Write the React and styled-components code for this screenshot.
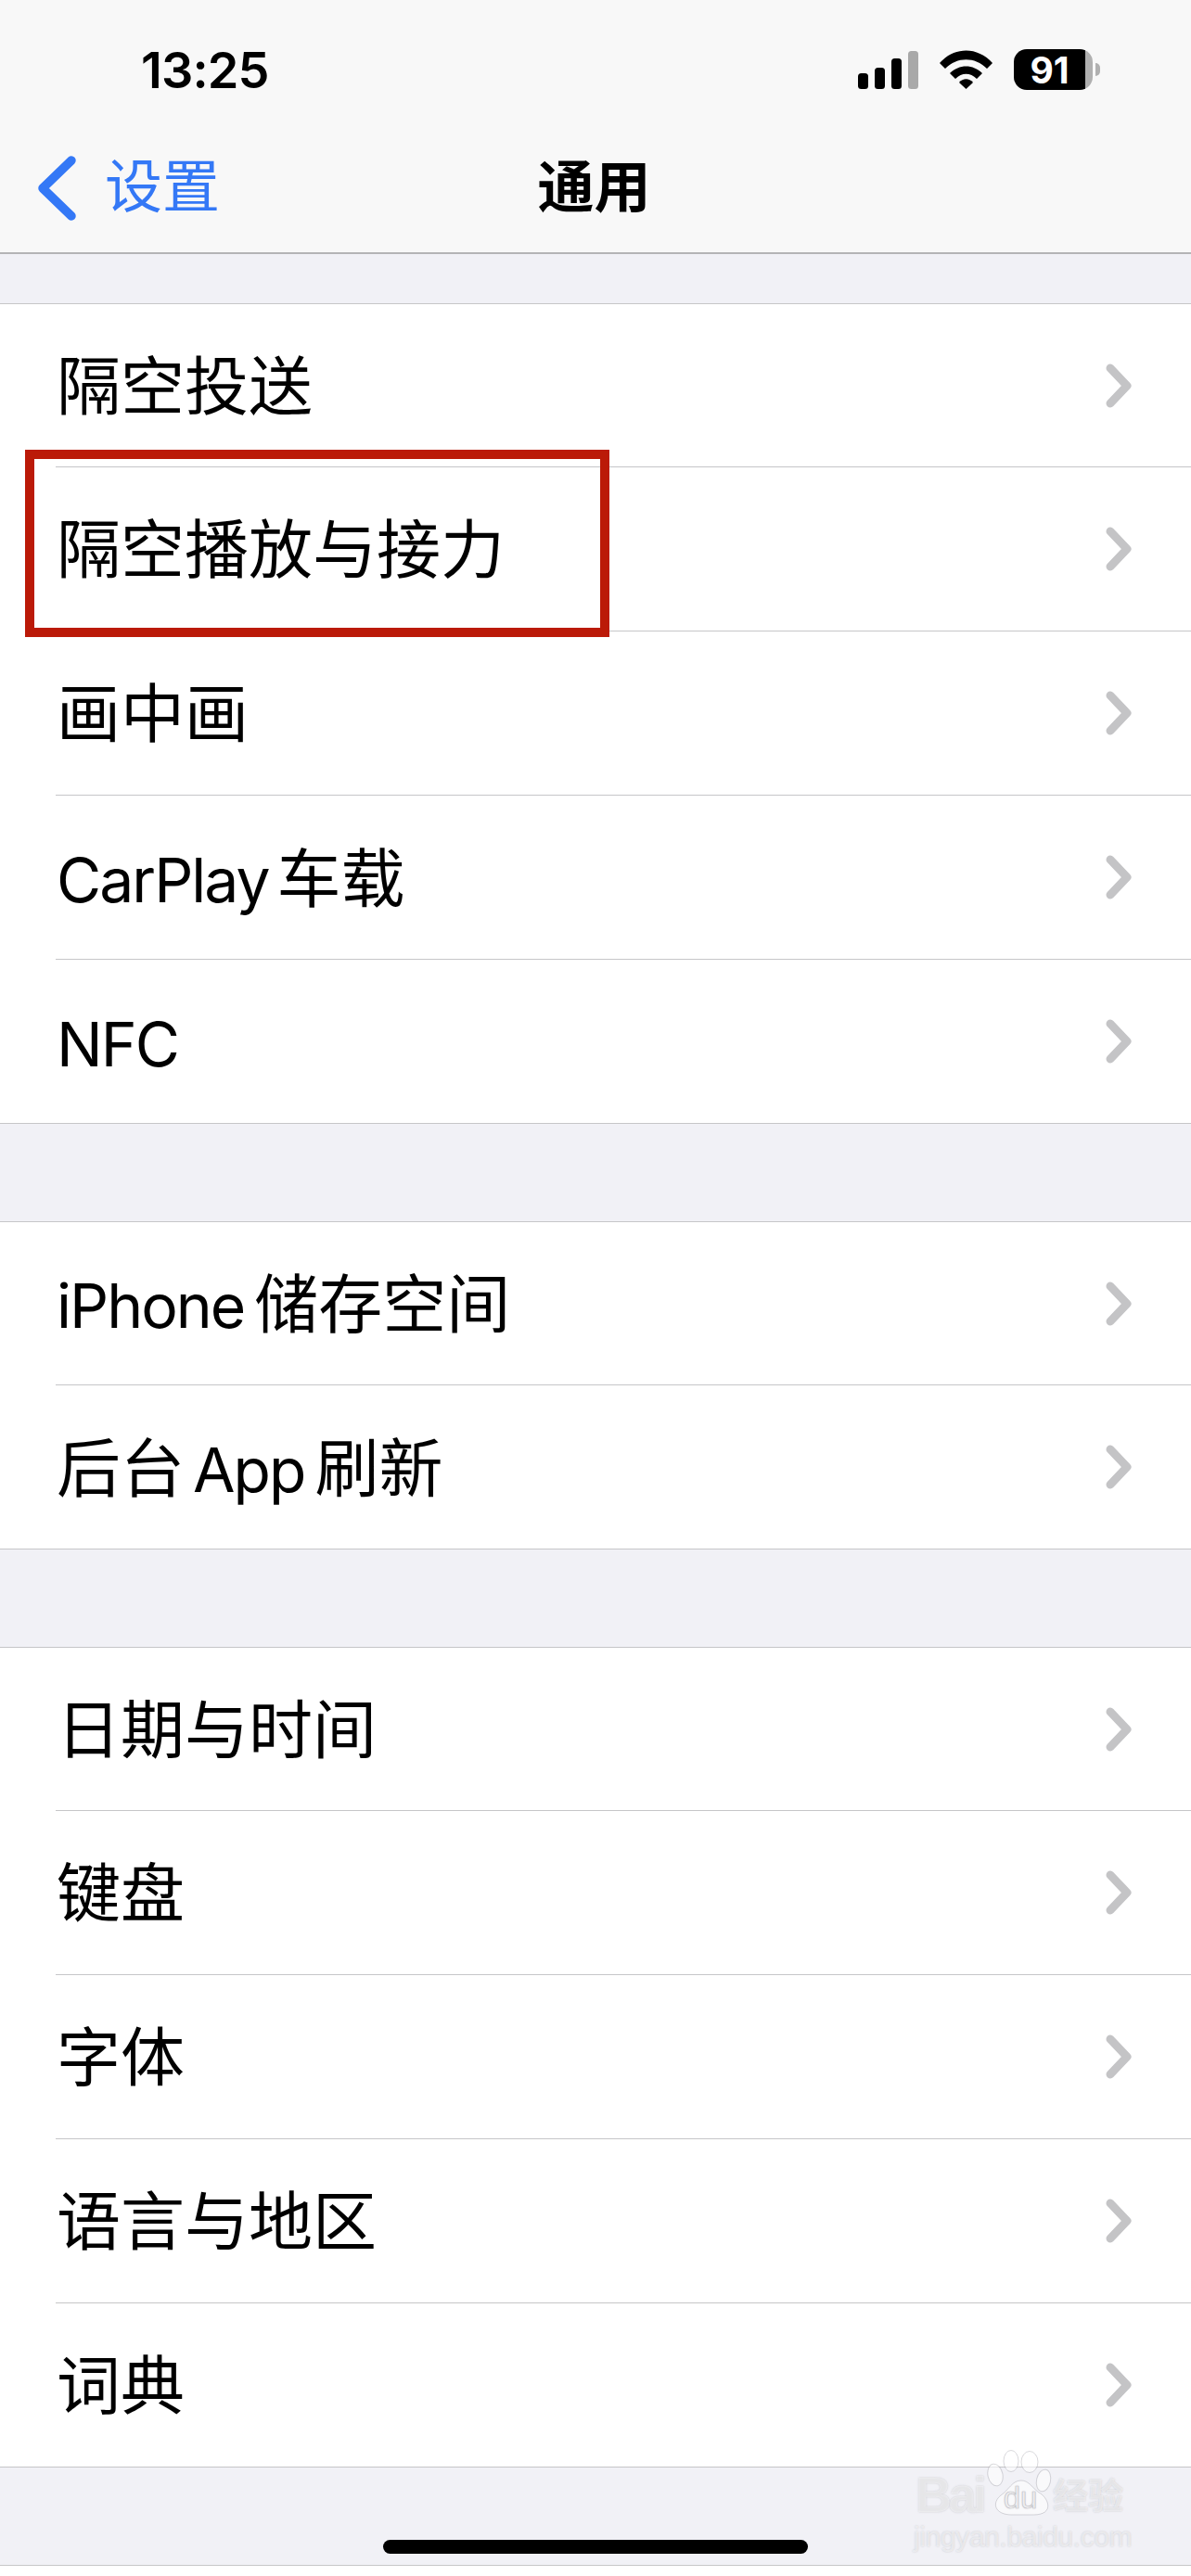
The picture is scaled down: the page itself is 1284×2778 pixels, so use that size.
import * as React from 'react'
import styled, { createGlobalStyle } from 'styled-components'

const GlobalStyle = createGlobalStyle`
  html, body { margin: 0; padding: 0; background: #fff; }
  * { box-sizing: border-box; }
`

const Page = styled.div`
  position: relative;
  width: 1284px;
  height: 2778px;
  overflow: hidden;
  background: #fff;
  font-family: "Liberation Sans", "Noto Sans CJK SC", sans-serif;
  color: #000;
`
const Header = styled.header`
  height: 274px;
  background: #f8f8f8;
  border-bottom: 2px solid #b4b4b6;
`
const StatusBar = styled.div`
  display: flex;
  align-items: flex-start;
  justify-content: space-between;
  height: 158px;
  padding: 53px 98px 0 152px;
`
const Time = styled.div`
  font-family: Inter, "Liberation Sans", sans-serif;
  font-size: 54px;
  font-weight: 600;
  line-height: 46px;
  letter-spacing: -0.9px;
`
const StatusIcons = styled.div`
  display: flex;
  align-items: center;
`
const Battery = styled.div`
  display: flex;
  align-items: center;
  margin-left: 23px;
`
const BatteryBody = styled.div`
  display: flex;
  align-items: center;
  justify-content: center;
  width: 85px;
  height: 44px;
  padding-right: 8px;
  border-radius: 14px;
  background: linear-gradient(to right, #000 91%, #b0b0b0 91%);
  color: #fff;
  font-family: Inter, "Liberation Sans", sans-serif;
  font-size: 39px;
  font-weight: 700;
`
const BatteryNub = styled.div`
  width: 5px;
  height: 14px;
  margin-left: 3px;
  border-radius: 0 7px 7px 0;
  background: #b0b0b0;
`
const NavBar = styled.div`
  display: grid;
  grid-template-columns: 1fr auto 1fr;
  align-items: center;
  height: 90px;
  padding: 0 44px 0 41px;
`
const BackLink = styled.div`
  display: flex;
  align-items: center;
  gap: 31px;
  color: #3478f6;
  font-size: 62px;
  line-height: 70px;
`
const Title = styled.div`
  font-size: 61px;
  font-weight: 700;
  line-height: 70px;
`
const Content = styled.main`
  display: flex;
  flex-direction: column;
  background: #f1f1f6;
  padding-top: 53px;
`
const Group = styled.section`
  display: flex;
  flex-direction: column;
  background: #fff;
  border-top: 1px solid #c6c6c8;
  border-bottom: 1px solid #c6c6c8;
  & + & { margin-top: 105px; }
`
const Row = styled.div`
  display: flex;
  height: 177px;
  padding-left: 60px;
  &:first-child, &:last-child { height: 176px; }
`
const RowInner = styled.div`
  display: flex;
  flex: 1;
  align-items: center;
  justify-content: space-between;
  padding: 0 64px 0 1px;
  border-bottom: ${(props) => (props.$last ? 'none' : '1px solid #c6c6c8')};
`
const Label = styled.div`
  padding-top: 6px;
  font-size: 69px;
  line-height: 80px;
  white-space: nowrap;
`
const Latin = styled.span`
  font-family: Inter, "Liberation Sans", sans-serif;
  font-size: 66px;
  letter-spacing: -2px;
  margin: ${(props) => props.$margin || '0'};
`
const Footer = styled.div`
  display: flex;
  align-items: flex-end;
  justify-content: center;
  height: 106px;
  padding-bottom: 12px;
  border-bottom: 1px solid #c6c6c8;
  background: #f1f1f6;
`
const HomeBar = styled.div`
  width: 458px;
  height: 15px;
  border-radius: 8px;
  background: #000;
`
const Highlight = styled.div`
  position: absolute;
  left: 27px;
  top: 485px;
  width: 630px;
  height: 202px;
  border: 10px solid #bb1a08;
`
const Watermark = styled.div`
  position: absolute;
  left: 985px;
  top: 2642px;
  width: 234px;
  display: flex;
  flex-direction: column;
  color: rgba(255, 255, 255, 0.55);
  text-shadow: 0 0 2px rgba(120, 120, 130, 0.35);
`
const MarkTop = styled.div`
  display: flex;
  align-items: flex-end;
  height: 71px;
`
const MarkBai = styled.div`
  width: 79px;
  padding-left: 2px;
  font-size: 54px;
  font-weight: 700;
  line-height: 46px;
  letter-spacing: -3.5px;
`
const MarkCn = styled.div`
  font-size: 38px;
  font-weight: 700;
  line-height: 42px;
`
const MarkDomain = styled.div`
  font-size: 30px;
  line-height: 32px;
  margin-top: 7px;
  letter-spacing: -0.4px;
  white-space: nowrap;
`

const SignalIcon = () => (
  <svg width="65" height="41" viewBox="0 0 65 41">
    <rect x="0" y="24" width="11" height="17" rx="3.5" />
    <rect x="18" y="18" width="11" height="23" rx="3.5" />
    <rect x="36" y="8" width="11" height="33" rx="3.5" />
    <rect x="54" y="0" width="11" height="41" rx="3.5" fill="#a9a9a9" />
  </svg>
)

const WifiIcon = () => (
  <svg width="57" height="42" viewBox="0 0 57 42" style={{ marginLeft: 23 }}>
    <path d="M0 14 C16 -4 41 -4 57 14 L51 20 C38 7 19 7 6 20 Z" />
    <path d="M11 25 C21 15 36 15 46 25 L40 31 C33 24 24 24 17 31 Z" />
    <path d="M21 35 C25 30 32 30 36 35 L28.5 42 Z" />
  </svg>
)

const BackChevron = () => (
  <svg width="41" height="70" viewBox="0 0 41 70">
    <path
      d="M36 5 L5 35 L36 65"
      fill="none"
      stroke="#3478f6"
      strokeWidth="9.5"
      strokeLinecap="round"
      strokeLinejoin="round"
    />
  </svg>
)

const Chevron = () => (
  <svg width="28" height="48" viewBox="0 0 28 48">
    <path
      d="M5 5 L23 24 L5 43"
      fill="none"
      stroke="#c4c4c6"
      strokeWidth="9"
      strokeLinecap="round"
      strokeLinejoin="round"
    />
  </svg>
)

const PawIcon = () => (
  <svg width="71" height="71" viewBox="0 0 71 71">
    <g fill="rgba(255,255,255,0.55)" stroke="rgba(120,120,130,0.28)" strokeWidth="1">
      <ellipse cx="9" cy="27" rx="8" ry="12" transform="rotate(-12 9 27)" />
      <ellipse cx="26" cy="12" rx="8" ry="11.5" />
      <ellipse cx="46" cy="13" rx="9" ry="11.5" />
      <ellipse cx="61" cy="33" rx="7.5" ry="12" transform="rotate(12 61 33)" />
      <path d="M37 33 C45 33 49 41 56 46 C66 51 74 70 50 70 L27 70 C8 70 5 57 15 49 C24 43 27 33 37 33 Z" />
    </g>
    <text
      x="36"
      y="63"
      textAnchor="middle"
      fontFamily="Liberation Sans"
      fontSize="33"
      fill="rgba(255,255,255,0.4)"
      stroke="rgba(120,120,130,0.4)"
      strokeWidth="0.7"
    >
      du
    </text>
  </svg>
)

const groups = [
  [
    <>隔空投送</>,
    <>隔空播放与接力</>,
    <>画中画</>,
    <><Latin $margin="0 9px 0 0">CarPlay</Latin>车载</>,
    <Latin>NFC</Latin>,
  ],
  [
    <><Latin $margin="0 11px 0 0">iPhone</Latin>储存空间</>,
    <>后台<Latin $margin="0 11px 0 9px">App</Latin>刷新</>,
  ],
  [
    <>日期与时间</>,
    <>键盘</>,
    <>字体</>,
    <>语言与地区</>,
    <>词典</>,
  ],
]

const App = () => (
  <Page>
    <GlobalStyle />
    <Header>
      <StatusBar>
        <Time>13:25</Time>
        <StatusIcons>
          <SignalIcon />
          <WifiIcon />
          <Battery>
            <BatteryBody>91</BatteryBody>
            <BatteryNub />
          </Battery>
        </StatusIcons>
      </StatusBar>
      <NavBar>
        <BackLink>
          <BackChevron />
          设置
        </BackLink>
        <Title>通用</Title>
      </NavBar>
    </Header>
    <Content>
      {groups.map((rows, g) => (
        <Group key={g}>
          {rows.map((label, i) => (
            <Row key={i}>
              <RowInner $last={i === rows.length - 1}>
                <Label>{label}</Label>
                <Chevron />
              </RowInner>
            </Row>
          ))}
        </Group>
      ))}
      <Footer>
        <HomeBar />
      </Footer>
    </Content>
    <Highlight />
    <Watermark>
      <MarkTop>
        <MarkBai>Bai</MarkBai>
        <PawIcon />
        <MarkCn>经验</MarkCn>
      </MarkTop>
      <MarkDomain>jingyan.baidu.com</MarkDomain>
    </Watermark>
  </Page>
)

export default App
